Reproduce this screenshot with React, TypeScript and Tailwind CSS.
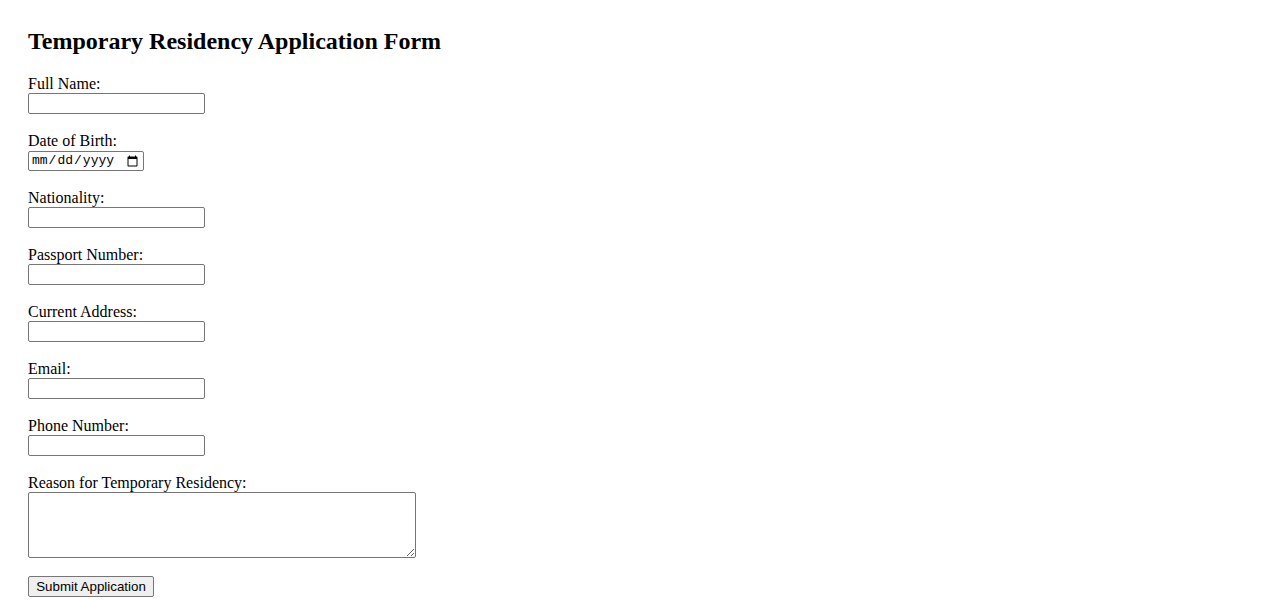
import React from "react";

const fields = [
  { label: "Full Name:", type: "text" },
  { label: "Date of Birth:", type: "date" },
  { label: "Nationality:", type: "text" },
  { label: "Passport Number:", type: "text" },
  { label: "Current Address:", type: "text" },
  { label: "Email:", type: "email" },
  { label: "Phone Number:", type: "tel" },
];

export default function App() {
  return (
    <div className="min-h-screen bg-white text-black font-['Liberation_Serif',serif] text-[16px] px-[28px] pt-[28px]">
      <h2 className="text-[24px] font-bold leading-[27px] mb-[19px]">
        Temporary Residency Application Form
      </h2>
      <form className="flex flex-col" onSubmit={(e) => e.preventDefault()}>
        {fields.map((f) => (
          <div key={f.label} className="flex flex-col items-start h-[57px]">
            <label className="leading-[19px] h-[19px]">{f.label}</label>
            {f.type === "date" ? (
              <input
                type="date"
                className="mt-[1px] w-[116px] h-[20px] border border-[#767676] rounded-[2px] px-[2px] text-[13px] font-['Liberation_Mono',monospace] bg-white"
              />
            ) : (
              <input
                type={f.type}
                className="w-[177px] h-[21px] border border-[#767676] rounded-[2px] px-[2px] text-[13.33px] font-['Liberation_Sans',sans-serif] bg-white"
              />
            )}
          </div>
        ))}
        <div className="flex flex-col items-start">
          <label className="leading-[19px] h-[19px]">
            Reason for Temporary Residency:
          </label>
          <textarea className="w-[388px] h-[66px] border border-[#767676] rounded-[2px] px-[2px] text-[13px] font-['Liberation_Mono',monospace] bg-white" />
        </div>
        <div className="mt-[16px]">
          <button
            type="submit"
            className="h-[21px] w-[126px] bg-[#efefef] border border-[#767676] rounded-[2px] px-[6px] text-[13.33px] leading-[15px] font-['Liberation_Sans',sans-serif] text-black"
          >
            Submit Application
          </button>
        </div>
      </form>
    </div>
  );
}
